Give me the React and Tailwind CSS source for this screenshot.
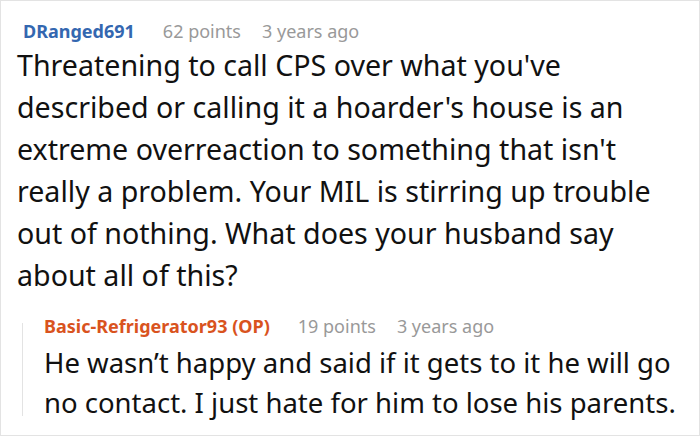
import React from 'react';

const Meta = ({ name, color, points, time }) => (
  <div className="flex items-baseline text-[18px] leading-[20px]">
    <span className={`font-bold ${color}`}>{name}</span>
    <span className="ml-[28px] text-[#999999]">{points}</span>
    <span className="ml-[21px] text-[#999999]">{time}</span>
  </div>
);

const App = () => {
  return (
    <div
      className="w-[700px] h-[436px] bg-white border border-[#e3e3e3] overflow-hidden"
      style={{ fontFamily: '"Noto Sans", "Open Sans", sans-serif' }}
    >
      <div className="pl-[22px] pt-[20px]">
        <Meta name="DRanged691" color="text-[#3467b0]" points="62 points" time="3 years ago" />
        <p className="mt-[3px] -ml-[6px] text-[28.6px] leading-[42px] text-[#111111] whitespace-nowrap">
          Threatening to call CPS over what you've<br />
          described or calling it a hoarder's house is an<br />
          extreme overreaction to something that isn't<br />
          really a problem. Your MIL is stirring up trouble<br />
          out of nothing. What does your husband say<br />
          about all of this?
        </p>
      </div>
      <div className="flex mt-[20px]">
        <div className="ml-[21px] my-[7px] w-px bg-[#e3e3e3]" />
        <div className="pl-[21px]">
          <Meta name="Basic-Refrigerator93 (OP)" color="text-[#d9531e]" points="19 points" time="3 years ago" />
          <p className="mt-[7px] text-[27.5px] leading-[40px] text-[#111111] whitespace-nowrap">
            He wasn’t happy and said if it gets to it he will go<br />
            no contact. I just hate for him to lose his parents.
          </p>
        </div>
      </div>
    </div>
  );
};

export default App;
